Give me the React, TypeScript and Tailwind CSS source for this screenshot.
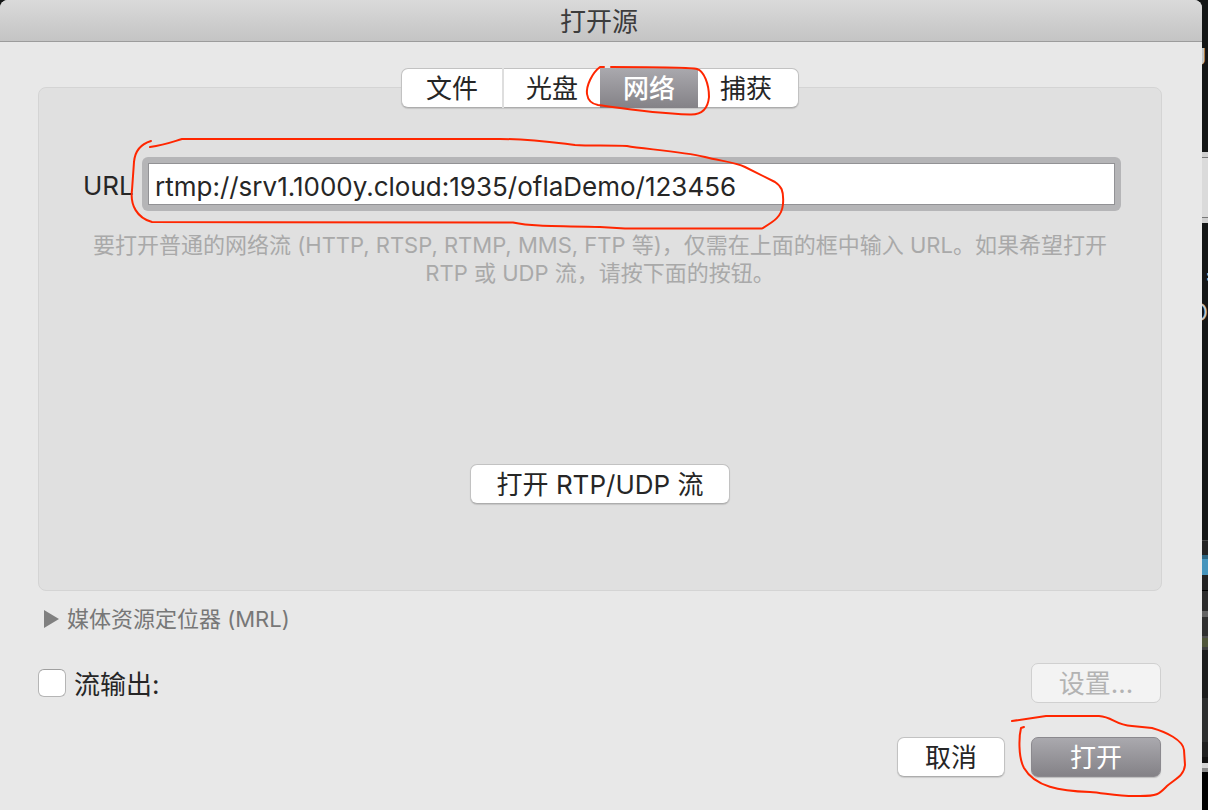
import React, { useState } from 'react';
import clsx from 'clsx';

const TABS = [
  { name: '文件', width: 'w-[102px]' },
  { name: '光盘', width: 'w-[96px]' },
  { name: '网络', width: 'w-[98px]' },
  { name: '捕获', width: 'w-[100px]' },
];

// Slices of the windows that show behind the dialog's right edge, top to bottom
const BACKDROP = [
  'h-[152px] bg-[#141616]',
  'h-[5px] bg-[#cfcfcf]',
  'h-px bg-[#777777]',
  'h-[59px] bg-[#dadada]',
  'h-px bg-[#777777]',
  'h-[5px] bg-[#cfcfcf]',
  'h-[317px] bg-[#141616]',
  'h-px bg-[#444444]',
  'h-[14px] bg-[#232323]',
  'h-[4px] bg-[#2d6784]',
  'h-[16px] bg-[#4695bd]',
  'h-[15px] bg-[#232323]',
  'h-px bg-black',
  'h-[20px] bg-[#2c2c2c]',
  'h-[6px] bg-[#636363]',
  'h-[19px] bg-[#303030]',
  'h-[2px] bg-[#505050]',
  'h-[9px] bg-[#50563a]',
  'h-[3px] bg-[#404040]',
  'h-[48px] bg-[#1c1d1d]',
  'h-[44px] bg-[#2d2e2e]',
  'h-[15px] bg-[#1f2020]',
  'h-[6px] bg-[#101010]',
  'h-[5px] bg-[#d4d4d4]',
  'h-[4px] bg-[#8a8a8a]',
];

interface MarkProps {
  viewBox: string;
  d: string;
  className: string;
}

function Mark({ viewBox, d, className }: MarkProps) {
  return (
    <svg viewBox={viewBox} aria-hidden="true" className={clsx('absolute z-20 max-w-none pointer-events-none', className)}>
      <path d={d} fill="none" stroke="#ff2600" strokeWidth="2" strokeLinecap="round" strokeLinejoin="round" />
    </svg>
  );
}

interface PushButtonProps {
  children: React.ReactNode;
  className?: string;
  primary?: boolean;
  disabled?: boolean;
}

function PushButton({ children, className, primary, disabled }: PushButtonProps) {
  return (
    <button
      type="button"
      disabled={disabled}
      className={clsx(
        'h-10 rounded-[7px] border pt-0.5 text-[26px] leading-none whitespace-nowrap',
        primary && 'border-[#8b898e] bg-linear-to-b from-[#aaa9ae] to-[#848287] text-white shadow-[0_1px_1px_#00000030]',
        disabled && 'border-[#d0d0d0] bg-[#f3f3f3] text-[#b3b3b3]',
        !primary && !disabled && 'border-[#c2c2c2] border-b-[#adadad] bg-white text-[#262626] shadow-[0_1px_1px_#00000020]',
        className
      )}
    >
      {children}
    </button>
  );
}

export default function App() {
  const [tab, setTab] = useState('网络');
  const [url, setUrl] = useState('rtmp://srv1.1000y.cloud:1935/oflaDemo/123456');
  const [streamOut, setStreamOut] = useState(false);

  return (
    <div lang="zh-CN" className="flex min-h-screen overflow-hidden bg-[#141616] font-[Inter,'Noto_Sans_CJK_SC',sans-serif]">
      <main className="flex-1 min-w-0 rounded-t-lg bg-[#e8e8e8] overflow-hidden">
        {/* Title bar */}
        <header className="flex h-[42px] items-center justify-center border-b border-[#9c9c9c] bg-linear-to-b from-[#dadada] to-[#c4c4c4] pr-1 pt-0.5">
          <h1 className="text-[26px] leading-none text-[#3c3c3c]">打开源</h1>
        </header>

        <div className="pt-[26px] pl-[38px] pr-10">
          {/* Source tabs */}
          <div className="relative z-10 flex justify-center">
            <div role="tablist" className="flex h-10 rounded-[7px] border border-[#c2c2c2] border-b-[#adadad] bg-white shadow-[0_1px_1px_#00000020]">
              {TABS.map((t, i) => (
                <div key={t.name} className={clsx('relative -my-px', t.width)}>
                  <button
                    type="button"
                    role="tab"
                    aria-selected={tab === t.name}
                    onClick={() => setTab(t.name)}
                    className={clsx(
                      'h-10 w-full pt-0.5 text-[26px] leading-none',
                      tab === t.name ? 'bg-linear-to-b from-[#aaa9ae] to-[#848287] font-medium text-white' : 'text-[#262626]',
                      i === 0 && 'border-r-2 border-[#dedede]',
                      i === 3 && 'pr-1'
                    )}
                  >
                    {t.name}
                  </button>
                  {t.name === '网络' && (
                    <Mark
                      viewBox="580 60 136 60"
                      className="-left-5 -top-2 h-[60px] w-[136px]"
                      d="M604 67 L600 67 C592 73 586 86 587 94 C588 101 592 104 598 105 C620 108 650 113 690 114.500 C702 115 708 108 709 97 C709 84 704 71 697 69 C690 67 650 67 611 67"
                    />
                  )}
                </div>
              ))}
            </div>
          </div>

          {/* Network panel */}
          <section className="-mt-[21px] flex h-[504px] flex-col items-center rounded-lg border border-[#d4d4d4] bg-[#e0e0e0] px-11 pt-[69px]">
            <div className="flex w-full items-center">
              <label htmlFor="url" className="w-[59px] pt-1 text-[26px] leading-8 text-[#262626]">URL</label>
              {/* Focus ring */}
              <div className="relative -mr-1 flex-1 rounded-md bg-[#b5b5b7] p-1.5">
                <input
                  id="url"
                  type="text"
                  value={url}
                  onChange={e => setUrl(e.target.value)}
                  className="block h-[42px] w-full rounded-none border border-[#929295] bg-white px-1.5 pt-1 text-[26px] text-[#262626] outline-none"
                />
                <Mark
                  viewBox="126 134 664 100"
                  className="-left-4 -top-[23px] h-[100px] w-[664px]"
                  d="M151 141 C141 144 135 150 134 162 L132 190 C130 205 137 218 152 222 L513 222.500 C530 226 545 226 600 227 L625 228.500 L762 228.500 C773 222 782 217 783 204 C784 190 781 186 775 182 L745 167 C735 162 720 161 705 157 C680 151 642 149 627 146 C610 145 590 146 575 145 C550 142 530 139 500 139 L182 139 C172 142 165 145 150 147"
                />
              </div>
            </div>
            <p className="mt-5 text-center text-[22px] leading-7 text-[#a9a9a9]">
              要打开普通的网络流 (HTTP, RTSP, RTMP, MMS, FTP 等)，仅需在上面的框中输入 URL。如果希望打开 RTP 或 UDP 流，请按下面的按钮。
            </p>
            <PushButton className="mt-[177px] w-[260px]">打开 RTP/UDP 流</PushButton>
          </section>

          <button type="button" aria-expanded="false" className="mt-3 ml-[5px] flex h-8 items-center gap-2 text-[22px] leading-8 text-[#777777]">
            <svg viewBox="0 0 16 18" className="h-[18px] w-4" aria-hidden="true">
              <path d="M1 0 L16 9 L1 18 Z" fill="#808080" />
            </svg>
            <span>媒体资源定位器 (MRL)</span>
          </button>

          <div className="mt-7 mr-px flex h-10 items-center justify-between">
            <label className="flex items-center gap-2 text-[26px] leading-8 text-[#262626]">
              <input
                type="checkbox"
                checked={streamOut}
                onChange={e => setStreamOut(e.target.checked)}
                className="size-7 appearance-none rounded-md border border-[#b5b5b5] border-t-[#9f9f9f] bg-white checked:bg-[#8b898e]"
              />
              <span className="pt-1">流输出:</span>
            </label>
            <PushButton disabled className="w-[130px]">设置...</PushButton>
          </div>

          <div className="mt-[34px] mr-px mb-8 flex justify-end gap-[26px]">
            <PushButton className="w-[108px]">取消</PushButton>
            <div className="relative">
              <PushButton primary className="w-[130px]">打开</PushButton>
              <Mark
                viewBox="1006 710 184 92"
                className="-left-[25px] -top-[27px] h-[92px] w-[184px]"
                d="M1012 721 L1046 716 L1099 716 C1113 717 1115 725 1132 726 L1152 728 C1166 732 1183 740 1184 750 L1185 765 C1184 776 1175 779 1167 786 C1159 794 1158 796 1140 796 C1120 797 1105 793 1090 792 C1060 791 1035 787 1024 768 C1018 757 1019 736 1021 728 L1024 727"
              />
            </div>
          </div>
        </div>
      </main>

      {/* Windows behind the dialog */}
      <aside aria-hidden="true" className="relative w-1.5 overflow-hidden bg-black">
        {BACKDROP.map((slice, i) => (
          <div key={i} className={slice} />
        ))}
        <span className="absolute right-0.5 top-9 text-[22px] leading-8 font-semibold text-[#c4c4c4]">g</span>
        <span className="absolute left-[3px] top-[259px] text-[22px] leading-8 font-semibold text-[#c4c4c4]">=</span>
        <span className="absolute right-0 top-[297px] text-[24px] leading-8 text-[#c4c4c4]">D</span>
      </aside>
    </div>
  );
}
